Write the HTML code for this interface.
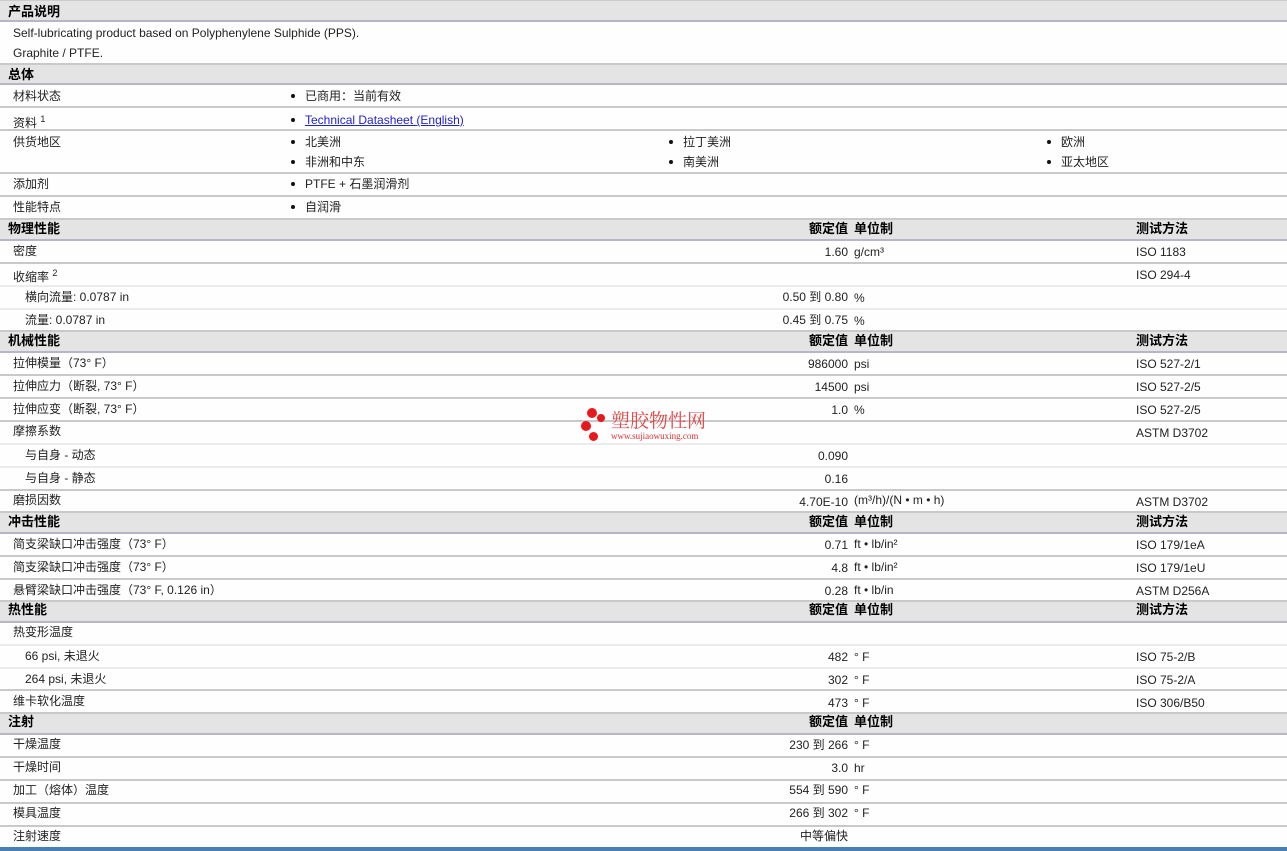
<!DOCTYPE html>
<html><head><meta charset="utf-8"><style>
*{margin:0;padding:0;box-sizing:border-box}
body{width:1287px;height:851px;background:#fdfefd;font-family:"Liberation Sans","Noto Sans CJK SC",sans-serif;font-size:12px;color:#222;position:relative;overflow:hidden}
.r{position:absolute;left:0;width:1287px;border-bottom:2px solid #c9c9c9}
.l{border-bottom:2px solid #ececec}
.h{background:#e5e4e4;font-weight:bold;font-size:13px;color:#000;border-bottom:2px solid #b9b6c4}
.t{position:absolute;white-space:nowrap;line-height:14px}
.v{position:absolute;right:439px;text-align:right;white-space:nowrap;line-height:14px}
.u{left:854px}.m{left:1136px}
.b:before{content:"";position:absolute;left:-14px;top:5px;width:4px;height:4px;border-radius:50%;background:#111}
a{color:#2222cc;text-decoration:underline}
</style></head><body>
<div class="r h" style="top:0;height:22px;border-top:1px solid #ccc"><span class="t" style="left:8px;top:4px">产品说明</span></div>
<span class="t" style="left:13px;top:26px">Self-lubricating product based on Polyphenylene Sulphide (PPS).</span>
<span class="t" style="left:13px;top:46px">Graphite / PTFE.</span>
<div class="r h" style="top:63px;height:22px;border-top:2px solid #c9c9c9"><span class="t" style="left:8px;top:3px">总体</span></div>
<div class="r" style="top:85px;height:23px"><span class="t" style="left:13px;top:4px">材料状态</span><span class="t b" style="left:305px;top:4px">已商用：当前有效</span></div>
<div class="r" style="top:108px;height:23px"><span class="t" style="left:13px;top:4px">资料 <sup style="font-size:9px">1</sup></span><span class="t b" style="left:305px;top:5px"><a>Technical Datasheet (English)</a></span></div>
<div class="r" style="top:131px;height:43px"><span class="t" style="left:13px;top:4px">供货地区</span><span class="t b" style="left:305px;top:4px">北美洲</span><span class="t b" style="left:305px;top:24px">非洲和中东</span><span class="t b" style="left:683px;top:4px">拉丁美洲</span><span class="t b" style="left:683px;top:24px">南美洲</span><span class="t b" style="left:1061px;top:4px">欧洲</span><span class="t b" style="left:1061px;top:24px">亚太地区</span></div>
<div class="r" style="top:174px;height:23px"><span class="t" style="left:13px;top:3px">添加剂</span><span class="t b" style="left:305px;top:3px">PTFE + 石墨润滑剂</span></div>
<div class="r" style="top:197px;height:23px"><span class="t" style="left:13px;top:3px">性能特点</span><span class="t b" style="left:305px;top:3px">自润滑</span></div>

<div class="r h" style="top:220px;height:21px"><span class="t" style="left:8px;top:2px">物理性能</span><span class="v" style="top:2px">额定值</span><span class="t u" style="top:2px">单位制</span><span class="t m" style="top:2px">测试方法</span></div>
<div class="r" style="top:241px;height:23px"><span class="t" style="left:13px;top:3px">密度</span><span class="v" style="top:4px">1.60</span><span class="t u" style="top:4px">g/cm³</span><span class="t m" style="top:4px">ISO 1183</span></div>
<div class="r l" style="top:264px;height:23px"><span class="t" style="left:13px;top:2px">收缩率 <sup style="font-size:9px">2</sup></span><span class="t m" style="top:4px">ISO 294-4</span></div>
<div class="r l" style="top:287px;height:23px"><span class="t" style="left:25px;top:3px">横向流量: 0.0787 in</span><span class="v" style="top:3px">0.50 到 0.80</span><span class="t u" style="top:4px">%</span></div>
<div class="r" style="top:310px;height:22px"><span class="t" style="left:25px;top:3px">流量: 0.0787 in</span><span class="v" style="top:3px">0.45 到 0.75</span><span class="t u" style="top:4px">%</span></div>

<div class="r h" style="top:332px;height:21px"><span class="t" style="left:8px;top:2px">机械性能</span><span class="v" style="top:2px">额定值</span><span class="t u" style="top:2px">单位制</span><span class="t m" style="top:2px">测试方法</span></div>
<div class="r" style="top:353px;height:23px"><span class="t" style="left:13px;top:3px">拉伸模量（73° F）</span><span class="v" style="top:4px">986000</span><span class="t u" style="top:4px">psi</span><span class="t m" style="top:4px">ISO 527-2/1</span></div>
<div class="r" style="top:376px;height:23px"><span class="t" style="left:13px;top:3px">拉伸应力（断裂, 73° F）</span><span class="v" style="top:4px">14500</span><span class="t u" style="top:4px">psi</span><span class="t m" style="top:4px">ISO 527-2/5</span></div>
<div class="r" style="top:399px;height:23px"><span class="t" style="left:13px;top:3px">拉伸应变（断裂, 73° F）</span><span class="v" style="top:4px">1.0</span><span class="t u" style="top:4px">%</span><span class="t m" style="top:4px">ISO 527-2/5</span></div>
<div class="r l" style="top:422px;height:23px"><span class="t" style="left:13px;top:2px">摩擦系数</span><span class="t m" style="top:4px">ASTM D3702</span></div>
<div class="r l" style="top:445px;height:23px"><span class="t" style="left:25px;top:3px">与自身 - 动态</span><span class="v" style="top:4px">0.090</span></div>
<div class="r" style="top:468px;height:23px"><span class="t" style="left:25px;top:3px">与自身 - 静态</span><span class="v" style="top:4px">0.16</span></div>
<div class="r" style="top:491px;height:22px"><span class="t" style="left:13px;top:2px">磨损因数</span><span class="v" style="top:4px">4.70E-10</span><span class="t u" style="top:2px">(m³/h)/(N • m • h)</span><span class="t m" style="top:4px">ASTM D3702</span></div>

<div class="r h" style="top:513px;height:21px"><span class="t" style="left:8px;top:2px">冲击性能</span><span class="v" style="top:2px">额定值</span><span class="t u" style="top:2px">单位制</span><span class="t m" style="top:2px">测试方法</span></div>
<div class="r" style="top:534px;height:23px"><span class="t" style="left:13px;top:3px">简支梁缺口冲击强度（73° F）</span><span class="v" style="top:4px">0.71</span><span class="t u" style="top:3px">ft • lb/in²</span><span class="t m" style="top:4px">ISO 179/1eA</span></div>
<div class="r" style="top:557px;height:23px"><span class="t" style="left:13px;top:3px">简支梁缺口冲击强度（73° F）</span><span class="v" style="top:4px">4.8</span><span class="t u" style="top:3px">ft • lb/in²</span><span class="t m" style="top:4px">ISO 179/1eU</span></div>
<div class="r" style="top:580px;height:22px"><span class="t" style="left:13px;top:3px">悬臂梁缺口冲击强度（73° F, 0.126 in）</span><span class="v" style="top:4px">0.28</span><span class="t u" style="top:3px">ft • lb/in</span><span class="t m" style="top:4px">ASTM D256A</span></div>

<div class="r h" style="top:602px;height:21px"><span class="t" style="left:8px;top:1px">热性能</span><span class="v" style="top:1px">额定值</span><span class="t u" style="top:1px">单位制</span><span class="t m" style="top:1px">测试方法</span></div>
<div class="r l" style="top:623px;height:23px"><span class="t" style="left:13px;top:2px">热变形温度</span></div>
<div class="r l" style="top:646px;height:23px"><span class="t" style="left:25px;top:3px">66 psi, 未退火</span><span class="v" style="top:4px">482</span><span class="t u" style="top:4px">° F</span><span class="t m" style="top:4px">ISO 75-2/B</span></div>
<div class="r" style="top:669px;height:22px"><span class="t" style="left:25px;top:3px">264 psi, 未退火</span><span class="v" style="top:4px">302</span><span class="t u" style="top:4px">° F</span><span class="t m" style="top:4px">ISO 75-2/A</span></div>
<div class="r" style="top:691px;height:23px"><span class="t" style="left:13px;top:3px">维卡软化温度</span><span class="v" style="top:5px">473</span><span class="t u" style="top:5px">° F</span><span class="t m" style="top:5px">ISO 306/B50</span></div>

<div class="r h" style="top:714px;height:21px"><span class="t" style="left:8px;top:1px">注射</span><span class="v" style="top:1px">额定值</span><span class="t u" style="top:1px">单位制</span></div>
<div class="r" style="top:735px;height:23px"><span class="t" style="left:13px;top:2px">干燥温度</span><span class="v" style="top:3px">230 到 266</span><span class="t u" style="top:3px">° F</span></div>
<div class="r" style="top:758px;height:23px"><span class="t" style="left:13px;top:2px">干燥时间</span><span class="v" style="top:3px">3.0</span><span class="t u" style="top:3px">hr</span></div>
<div class="r" style="top:781px;height:23px"><span class="t" style="left:13px;top:2px">加工（熔体）温度</span><span class="v" style="top:2px">554 到 590</span><span class="t u" style="top:2px">° F</span></div>
<div class="r" style="top:804px;height:23px"><span class="t" style="left:13px;top:2px">模具温度</span><span class="v" style="top:2px">266 到 302</span><span class="t u" style="top:2px">° F</span></div>
<span class="t" style="left:13px;top:829px">注射速度</span><span class="v" style="top:829px">中等偏快</span>
<div style="position:absolute;left:0;top:847px;width:1287px;height:4px;background:#4a7fb3"></div>

<div style="position:absolute;left:580px;top:406px;width:135px;height:38px">
<div style="position:absolute;left:7px;top:2px;width:10px;height:10px;border-radius:50%;background:#e8191c"></div>
<div style="position:absolute;left:17px;top:8px;width:8px;height:8px;border-radius:50%;background:#e8191c"></div>
<div style="position:absolute;left:1px;top:15px;width:10px;height:10px;border-radius:50%;background:#e8191c"></div>
<div style="position:absolute;left:9px;top:26px;width:9px;height:9px;border-radius:50%;background:#e8191c"></div>
<span class="t" style="left:31px;top:4px;font-size:19px;line-height:20px;color:#e04848;font-family:'Noto Serif CJK SC',serif">塑胶物性网</span>
<span class="t" style="left:31px;top:25px;font-size:9px;line-height:10px;color:#d33;font-family:'Liberation Serif',serif">www.sujiaowuxing.com</span>
</div>
</body></html>
